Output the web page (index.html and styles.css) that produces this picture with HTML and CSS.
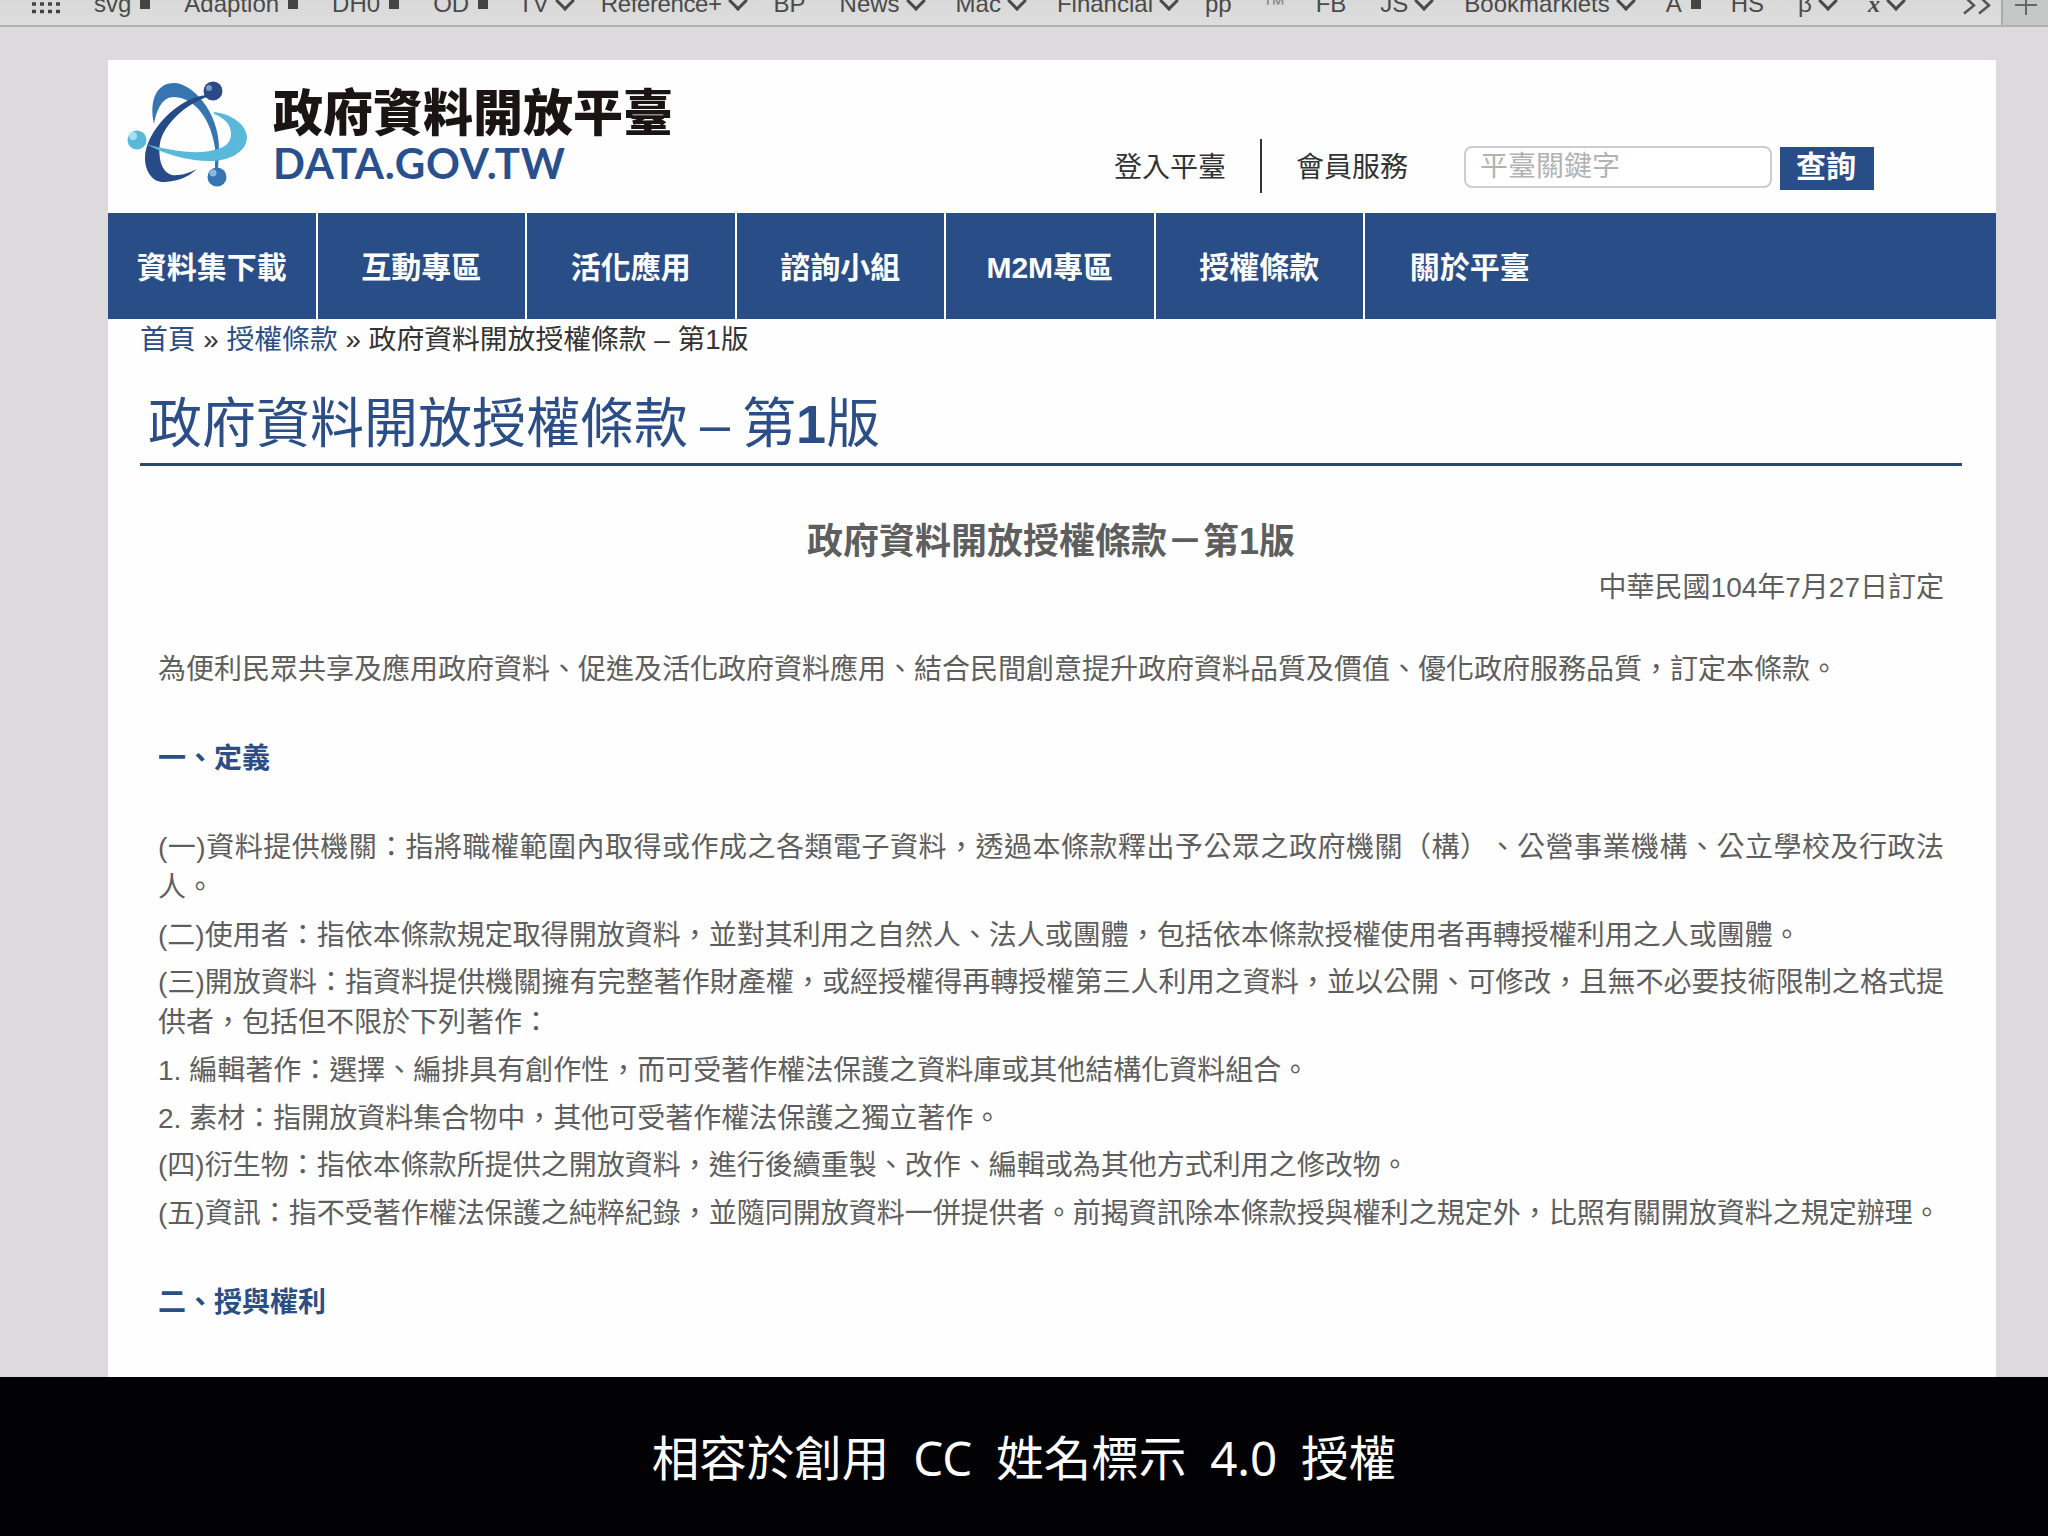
FILE: index.html
```html
<!DOCTYPE html>
<html lang="zh-Hant">
<head>
    <meta charset="UTF-8">
    <meta name="viewport" content="width=device-width, initial-scale=1.0">
    <title>政府資料開放平臺</title>
    <link rel="stylesheet" href="styles.css">
</head>
<body>
    <div class="bookmarks">
        <svg class="grid-icon" width="28" height="14" viewBox="0 0 28 14">
            <path d="M0 4h28M0 11.500h28" stroke="#444" stroke-width="3.400" stroke-dasharray="4 4"/>
        </svg>
        <ul class="bookmark-list">
            <li class="folder">svg</li>
            <li class="folder">Adaption</li>
            <li class="folder">DH0</li>
            <li class="folder tight">OD</li>
            <li class="menu tight">TV</li>
            <li class="menu tight narrow">Reference+</li>
            <li>BP</li>
            <li class="menu">News</li>
            <li class="menu">Mac</li>
            <li class="menu tight">Financial</li>
            <li class="tight">pp</li>
            <li class="faint tight">™</li>
            <li>FB</li>
            <li class="menu">JS</li>
            <li class="menu">Bookmarklets</li>
            <li class="folder tight">A</li>
            <li>HS</li>
            <li class="menu">β</li>
            <li class="menu italic">x</li>
        </ul>
        <svg class="more" width="30" height="16" viewBox="0 0 30 16">
            <path d="M2 -4l10 9.500l-10 8M17 -4l10 9.500l-10 8" fill="none" stroke="#555" stroke-width="2.500"/>
        </svg>
        <div class="new-tab">
            <svg width="24" height="26" viewBox="0 0 24 26">
                <path d="M1 5h22M12 -4v19" stroke="#666" stroke-width="2"/>
            </svg>
        </div>
    </div>

    <div class="page">
        <header class="header">
            <div class="logo">
                <svg class="logo-mark" width="130" height="115" viewBox="120 75 130 115">
                    <path d="M154 124C149 101 156 83 174 83C192 83 219 112 219 148L218 170H215V148C211 120 196 98 174 97C163 97 157 108 154 124Z" fill="#3674b2"/>
                    <path d="M207 95C178 97 145 132 145 158C145 172 153 183 165 182C178 181 187 178 197 169C189 173 180 176 172 175C161 172 158 157 160 143C164 124 186 104 207 97Z" fill="#264b88"/>
                    <path d="M214 112C232 114 247 125 247 138C246 153 228 161 210 161C187 161 164 154 146 144C164 149 184 153 203 152C220 150 231 146 231 134C231 124 224 118 214 114Z" fill="#58b9da"/>
                    <circle cx="213" cy="91" r="9.500" fill="#294a86"/>
                    <circle cx="209" cy="88" r="3" fill="#7c9ac4"/>
                    <circle cx="137" cy="140" r="9.500" fill="#58b9da"/>
                    <circle cx="133" cy="136" r="4" fill="#a8e0f1"/>
                    <circle cx="217" cy="177" r="9.500" fill="#3674b2"/>
                    <circle cx="213" cy="173" r="3.500" fill="#8ab8e0"/>
                </svg>
                <div class="logo-text">
                    <div class="logo-name">政府資料開放平臺</div>
                    <div class="logo-domain">DATA.GOV.TW</div>
                </div>
            </div>
            <div class="tools">
                <a class="tool-link">登入平臺</a>
                <a class="tool-link">會員服務</a>
                <input class="search" type="text" placeholder="平臺關鍵字">
                <button class="search-button">查詢</button>
            </div>
        </header>

        <nav class="nav">
            <a>資料集下載</a>
            <a>互動專區</a>
            <a>活化應用</a>
            <a>諮詢小組</a>
            <a>M2M專區</a>
            <a>授權條款</a>
            <a>關於平臺</a>
        </nav>

        <div class="breadcrumb"><a>首頁</a> » <a>授權條款</a> » 政府資料開放授權條款 – 第1版</div>
        <h1>政府資料開放授權條款 – 第<b>1</b>版</h1>

        <div class="content">
            <h2>政府資料開放授權條款－第1版</h2>
            <p class="date">中華民國104年7月27日訂定</p>
            <p class="intro">為便利民眾共享及應用政府資料、促進及活化政府資料應用、結合民間創意提升政府資料品質及價值、優化政府服務品質，訂定本條款。</p>
            <h3>一、定義</h3>
            <p>(一)資料提供機關：指將職權範圍內取得或作成之各類電子資料，透過本條款釋出予公眾之政府機關（構）、公營事業機構、公立學校及行政法人。</p>
            <p>(二)使用者：指依本條款規定取得開放資料，並對其利用之自然人、法人或團體，包括依本條款授權使用者再轉授權利用之人或團體。</p>
            <p>(三)開放資料：指資料提供機關擁有完整著作財產權，或經授權得再轉授權第三人利用之資料，並以公開、可修改，且無不必要技術限制之格式提供者，包括但不限於下列著作：</p>
            <p>1. 編輯著作：選擇、編排具有創作性，而可受著作權法保護之資料庫或其他結構化資料組合。</p>
            <p>2. 素材：指開放資料集合物中，其他可受著作權法保護之獨立著作。</p>
            <p>(四)衍生物：指依本條款所提供之開放資料，進行後續重製、改作、編輯或為其他方式利用之修改物。</p>
            <p>(五)資訊：指不受著作權法保護之純粹紀錄，並隨同開放資料一併提供者。前揭資訊除本條款授與權利之規定外，比照有關開放資料之規定辦理。</p>
            <h3>二、授與權利</h3>
        </div>
    </div>

    <div class="caption">相容於創用  CC  姓名標示  4.0  授權</div>
</body>
</html>
```

FILE: styles.css
```css
* {
    box-sizing: border-box;
}
body {
    margin: 0;
    height: 1536px;
    overflow: hidden;
    display: flex;
    flex-direction: column;
    background: #dddade;
    font-family: "Liberation Sans", "Noto Sans CJK TC", sans-serif;
    font-size: 28px;
    color: #333;
    text-spacing-trim: space-all;
}
.bookmarks {
    flex: none;
    display: flex;
    height: 27px;
    overflow: hidden;
    padding-left: 32px;
    background: linear-gradient(#d8d9d8, #dcdddc);
    border-bottom: 2px solid #b0b0b2;
    color: #4a4a4a;
    font-size: 24px;
    line-height: 24px;
}
.grid-icon {
    flex: none;
}
.bookmark-list {
    flex: 1;
    min-width: 0;
    display: flex;
    gap: 34px;
    margin: -8px 0 0 34px;
    padding: 0;
    list-style: none;
    white-space: nowrap;
}
.bookmark-list li {
    display: flex;
}
.folder::after {
    content: "";
    width: 10px;
    height: 14px;
    margin: 3px 0 0 9px;
    background: #444;
}
.menu::after {
    content: "";
    width: 11px;
    height: 11px;
    margin: 2px -1px 0 9px;
    border: solid #4a4a4a;
    border-width: 0 3px 3px 0;
    transform: rotate(45deg);
}
.tight {
    margin-right: -4px;
}
.narrow {
    letter-spacing: -0.4px;
}
.faint {
    color: #888;
}
.italic {
    font-family: "Liberation Serif", serif;
    font-style: italic;
    font-weight: bold;
}
.more {
    flex: none;
    margin-right: 9px;
}
.new-tab {
    flex: none;
    width: 47px;
    padding-left: 11px;
    background: #c6c7c7;
    border-left: 2px solid #a9a9aa;
}
.page {
    flex: none;
    width: 1888px;
    height: 1317px;
    margin: 33px 0 0 108px;
    overflow: hidden;
    background: #fefefe;
}
.header {
    display: flex;
    justify-content: space-between;
    height: 153px;
}
.logo {
    display: flex;
    padding: 15px 0 0 12px;
}
.logo-text {
    padding: 8px 0 0 23px;
}
.logo-name {
    font-size: 50px;
    font-weight: 900;
    line-height: 62px;
    color: #1b1415;
}
.logo-domain {
    font-family: Lato, sans-serif;
    font-size: 42px;
    font-weight: bold;
    line-height: 36px;
    letter-spacing: 0.8px;
    color: #28508f;
}
.tools {
    display: flex;
    align-items: flex-start;
    padding: 79px 122px 0 0;
}
.tool-link {
    height: 54px;
    line-height: 57px;
}
.tool-link + .tool-link {
    margin: 0 56px 0 34px;
    padding-left: 34px;
    border-left: 2px solid #333;
}
.search {
    width: 308px;
    height: 42px;
    margin-top: 7px;
    padding: 0 14px;
    border: 2px solid #cfcbd2;
    border-radius: 8px;
    background: #fff;
    font: inherit;
}
.search::placeholder {
    color: #b2b2b2;
}
.search-button {
    width: 94px;
    height: 43px;
    margin: 8px 0 0 8px;
    padding: 0 2px 3px 0;
    border: 0;
    background: #294d87;
    color: #fff;
    font: bold 30px/40px "Liberation Sans", "Noto Sans CJK TC", sans-serif;
}
.nav {
    display: flex;
    height: 106px;
    background: #294d87;
}
.nav a {
    width: 209.500px;
    border-right: 2px solid #fff;
    color: #fff;
    font-size: 30px;
    font-weight: bold;
    line-height: 109px;
    text-align: center;
}
.nav a:last-child {
    border-right: 0;
}
.breadcrumb {
    padding-left: 32px;
    font-size: 27.800px;
    line-height: 42px;
}
.breadcrumb a,
h1,
h3 {
    color: #2b4e86;
}
h1 {
    margin: 24px 34px 0 32px;
    padding-left: 8px;
    border-bottom: 3px solid #2c4a69;
    font-size: 54px;
    font-weight: normal;
    line-height: 78px;
    word-spacing: -3px;
}
.content {
    padding: 46px 52px 0 50px;
    color: #5e5e5e;
    line-height: 40px;
}
.content p {
    margin: 0 0 7.700px;
    text-align: justify;
}
h2 {
    margin: 0;
    font-size: 36px;
    line-height: 60px;
    text-align: center;
}
h3 {
    margin: 49px 0;
    font-size: 28px;
    line-height: 40px;
}
.content .date {
    margin: -4px 0 42px;
    text-align: right;
}
.content .intro {
    margin: 0;
}
.caption {
    flex: 1;
    background: #020104;
    color: #fff;
    font-family: "Noto Sans", "Noto Sans CJK TC", sans-serif;
    font-size: 47.500px;
    line-height: 162px;
    text-align: center;
    white-space: pre;
    word-spacing: -0.4px;
}
```
